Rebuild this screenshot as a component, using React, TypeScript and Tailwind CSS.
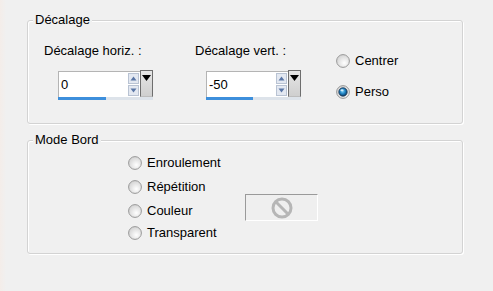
import React from "react";

function Radio({ checked }: { checked?: boolean }) {
  return (
    <svg width="14" height="14" viewBox="0 0 14 14" className="shrink-0">
      <defs>
        <radialGradient id="rg-off" cx="0.6" cy="0.65" r="0.7">
          <stop offset="0" stopColor="#ffffff" />
          <stop offset="1" stopColor="#d0d0d0" />
        </radialGradient>
        <radialGradient id="rg-on" cx="0.45" cy="0.4" r="0.6">
          <stop offset="0" stopColor="#7fd2f7" />
          <stop offset="0.55" stopColor="#1d7fbf" />
          <stop offset="1" stopColor="#0b3a63" />
        </radialGradient>
      </defs>
      <circle cx="7" cy="7" r="6.4" fill="url(#rg-off)" stroke="#999999" strokeWidth="1" />
      {checked && (
        <>
          <circle cx="7" cy="7" r="4.2" fill="url(#rg-on)" stroke="#1a3550" strokeWidth="0.8" />
          <ellipse cx="6" cy="5.3" rx="1.6" ry="1" fill="#e6f7ff" opacity="0.85" />
        </>
      )}
    </svg>
  );
}

function RadioRow({ label, checked }: { label: string; checked?: boolean }) {
  return (
    <div className="flex items-center gap-[5px] h-[16px] leading-[16px]">
      <Radio checked={checked} />
      <span>{label}</span>
    </div>
  );
}

function SpinBox({ value, fill }: { value: string; fill: number }) {
  return (
    <div className="flex flex-col w-[95px]">
      <div className="flex h-[27px]">
        <div className="flex-1 flex items-center bg-white border border-[#b4b4b4] border-r-0 h-[27px] mt-[1px] pl-[2px] pr-[1px]">
          <span className="flex-1 leading-[15px]">{value}</span>
          <div className="flex flex-col gap-[1px]">
            <svg width="11" height="11" viewBox="0 0 11 11">
              <rect x="0.5" y="0.5" width="10" height="10" fill="#e3e8f1" stroke="#b9c3d3" />
              <path d="M2.5 7.5 L5.5 3.5 L8.5 7.5 Z" fill="#5a76a6" />
            </svg>
            <svg width="11" height="11" viewBox="0 0 11 11">
              <rect x="0.5" y="0.5" width="10" height="10" fill="#e3e8f1" stroke="#b9c3d3" />
              <path d="M2.5 3.5 L5.5 7.5 L8.5 3.5 Z" fill="#5a76a6" />
            </svg>
          </div>
        </div>
        <div className="w-[13px] h-[27px] bg-gradient-to-b from-[#e6e6e6] to-[#cfcfcf] border border-[#6e6e6e] border-b-[#bdbdbd] flex justify-center pt-[4px]">
          <svg width="9" height="6" viewBox="0 0 9 6">
            <path d="M0 0 L9 0 L4.5 6 Z" fill="#000" />
          </svg>
        </div>
      </div>
      <div className="h-[3px] bg-[#dde3ea] flex">
        <div className="h-full bg-[#3d8fdc]" style={{ width: fill }} />
      </div>
    </div>
  );
}

function Group({
  title,
  className,
  children,
}: {
  title: string;
  className: string;
  children: React.ReactNode;
}) {
  return (
    <div
      className={`relative w-[436px] border border-[#d3d3d3] rounded-[3px] shadow-[inset_1px_1px_0_#ffffff,1px_1px_0_#ffffff] ${className}`}
    >
      <span className="absolute left-[5px] -top-[9px] px-[2px] bg-[#f0f0f0] leading-[15px]">
        {title}
      </span>
      {children}
    </div>
  );
}

export default function App() {
  return (
    <div className="w-[493px] h-[291px] bg-[#f0f0f0] flex font-['Liberation_Sans',Arial,sans-serif] text-[13px] text-black overflow-hidden">
      <div className="w-[6px] h-full bg-gradient-to-r from-[#f4ede9] to-[#f0f0f0]" />
      <div className="flex flex-col pl-[21px] pt-[20px]">
        <Group title="Décalage" className="h-[104px]">
          <div className="flex pt-[22px] pl-[16px]">
            <div className="w-[151px] flex flex-col">
              <span className="leading-[15px]">Décalage horiz. :</span>
              <div className="ml-[14px] mt-[12px]">
                <SpinBox value="0" fill={48} />
              </div>
            </div>
            <div className="w-[141px] flex flex-col">
              <span className="leading-[15px]">Décalage vert. :</span>
              <div className="ml-[11px] mt-[12px]">
                <SpinBox value="-50" fill={47} />
              </div>
            </div>
            <div className="flex flex-col gap-[15px] mt-[10px]">
              <RadioRow label="Centrer" />
              <RadioRow label="Perso" checked />
            </div>
          </div>
        </Group>
        <Group title="Mode Bord" className="h-[114px] mt-[16px]">
          <div className="flex pt-[14px] pl-[100px]">
            <div className="w-[117px] flex flex-col">
              <RadioRow label="Enroulement" />
              <div className="mt-[8px]">
                <RadioRow label="Répétition" />
              </div>
              <div className="mt-[8px]">
                <RadioRow label="Couleur" />
              </div>
              <div className="mt-[6px]">
                <RadioRow label="Transparent" />
              </div>
            </div>
            <div className="mt-[39px] w-[73px] h-[27px] bg-[#efefef] border border-[#9a9a9a] border-r-white border-b-white flex items-center justify-center">
              <svg width="22" height="22" viewBox="0 0 22 22">
                <circle cx="11" cy="11" r="9" fill="none" stroke="#b6b6b6" strokeWidth="3" />
                <path d="M4.8 4.8 L17.2 17.2" stroke="#b6b6b6" strokeWidth="3" />
              </svg>
            </div>
          </div>
        </Group>
      </div>
    </div>
  );
}
